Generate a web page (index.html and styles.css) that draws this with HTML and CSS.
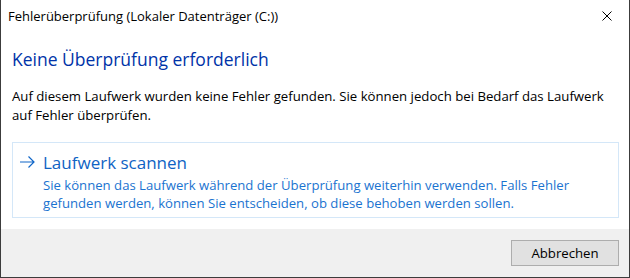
FILE: index.html
```html
<!DOCTYPE html>
<html lang="de">
<head>
<meta charset="utf-8">
<title>Fehlerüberprüfung</title>
<link rel="stylesheet" href="styles.css">
</head>
<body>
<div class="window">
  <div class="titlebar">
    <span class="title">Fehlerüberprüfung (Lokaler Datenträger (C:))</span>
    <span class="close" aria-label="Schließen">
      <svg width="10" height="10" viewBox="0 0 10 10"><path d="M0.5 0.5 L9.5 9.5 M9.5 0.5 L0.5 9.5" stroke="#000" stroke-width="1" fill="none"/></svg>
    </span>
  </div>
  <div class="content">
    <h1 class="heading">Keine Überprüfung erforderlich</h1>
    <p class="text">Auf diesem Laufwerk wurden keine Fehler gefunden. Sie können jedoch bei Bedarf das Laufwerk<br>auf Fehler überprüfen.</p>
    <div class="cmdlink">
      <div class="cmd-title">
        <svg class="arrow" width="16" height="12" viewBox="0 0 16 12"><path d="M1 6 H15 M9.5 0.5 L15 6 L9.5 11.5" stroke="#1066c8" stroke-width="1.2" fill="none"/></svg>
        <span>Laufwerk scannen</span>
      </div>
      <div class="cmd-desc">Sie können das Laufwerk während der Überprüfung weiterhin verwenden. Falls Fehler<br>gefunden werden, können Sie entscheiden, ob diese behoben werden sollen.</div>
    </div>
  </div>
  <div class="footer">
    <button class="btn">Abbrechen</button>
  </div>
</div>
</body>
</html>
```

FILE: styles.css
```css
* { box-sizing: border-box; }
html, body { margin: 0; padding: 0; background: #fff; }
body { font-family: "Open Sans", "Noto Sans", sans-serif; color: #000; }
.window {
  width: 630px; height: 278px;
  border: 1px solid #3c3c3c; border-top: none;
  display: flex; flex-direction: column;
  background: #fff;
}
.titlebar {
  height: 32px; display: flex; align-items: center; justify-content: space-between;
  padding: 0 17px 0 7px;
}
.title { font-size: 13px; color: #000; }
.close { display: flex; width: 10px; height: 10px; }
.content { flex: 1; padding: 14px 10px 0 11px; }
.heading {
  margin: 0; font-weight: normal; font-size: 17.5px; line-height: 26px; color: #0033a8;
}
.text { margin: 15px 0 0; font-size: 13.2px; line-height: 19px; color: #000; }
.cmdlink {
  margin-top: 17px; border: 1px solid #d4e7f8; height: 76px;
  padding: 7px 0 0 6px;
}
.cmd-title { display: flex; align-items: center; gap: 8px; height: 24px; color: #0f63c4; font-size: 17px; }
.arrow { flex: none; }
.cmd-desc { padding-left: 24px; font-size: 13.15px; line-height: 18px; color: #1a73d0; margin-top: 2px; }
.footer {
  height: 48px; background: #f0f0f0; display: flex; justify-content: flex-end; align-items: flex-start;
  padding: 11px 10px 0 0;
}
.btn {
  width: 108px; height: 26px; background: #e1e1e1; border: 1px solid #adadad;
  font-family: inherit; font-size: 13.2px; color: #000; padding: 0;
}
```
